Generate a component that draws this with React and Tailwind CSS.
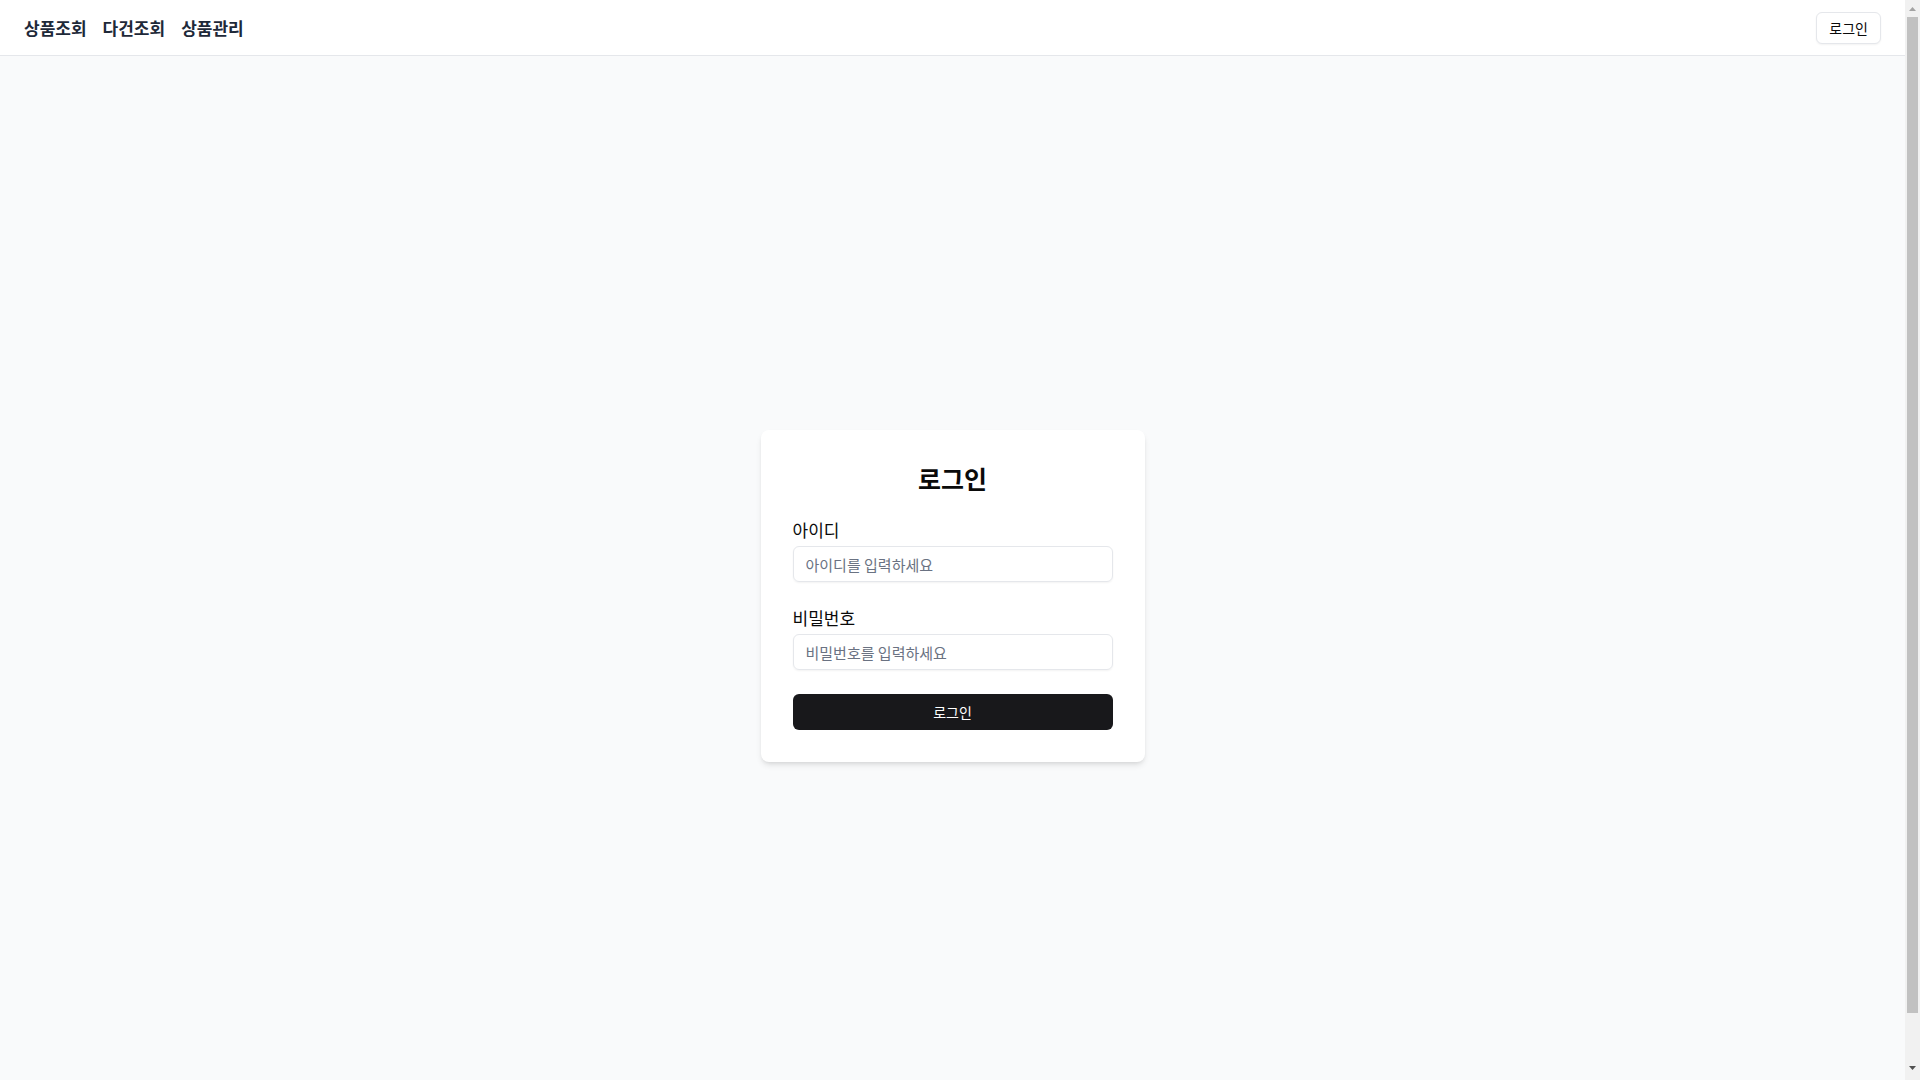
export default function App() {
  return (
    <div className="h-screen flex overflow-hidden bg-gray-50 text-[#0a0a0a]" style={{ fontFamily: '"Noto Sans CJK KR", "Noto Sans", sans-serif' }}>
      <div className="flex-1 min-w-0">
        <header className="h-14 bg-white border-b border-gray-200 flex items-center justify-between px-6">
          <nav className="flex items-center gap-4 text-[17px] leading-6 font-semibold text-gray-800">
            <a href="#">상품조회</a>
            <a href="#">다건조회</a>
            <a href="#">상품관리</a>
          </nav>
          <button className="h-8 px-3 text-sm border border-gray-200 rounded-md bg-white shadow-xs">로그인</button>
        </header>

        <main className="h-screen flex items-center justify-center">
          <div className="w-96 bg-white rounded-lg shadow-md p-8">
            <h1 className="text-[25px] leading-8 font-bold text-center mb-6">로그인</h1>
            <div className="flex flex-col gap-1 mb-6">
              <label className="text-[17px] leading-6 font-normal">아이디</label>
              <input
                type="text"
                placeholder="아이디를 입력하세요"
                className="h-9 w-full px-3 text-[15px] border border-gray-200 rounded-md shadow-xs placeholder:text-gray-500 outline-none"
              />
            </div>
            <div className="flex flex-col gap-1 mb-6">
              <label className="text-[17px] leading-6 font-normal">비밀번호</label>
              <input
                type="password"
                placeholder="비밀번호를 입력하세요"
                className="h-9 w-full px-3 text-[15px] border border-gray-200 rounded-md shadow-xs placeholder:text-gray-500 outline-none"
              />
            </div>
            <button className="h-9 w-full rounded-md bg-[#18181b] text-white text-sm">로그인</button>
          </div>
        </main>
      </div>

      {/* browser scrollbar */}
      <div className="w-[15px] h-screen bg-[#f1f1f1] flex flex-col items-center">
        <div className="h-[17px] flex items-center justify-center">
          <svg width="7" height="4" viewBox="0 0 7 4"><path d="M3.5 0L7 4H0z" fill="#a3a3a3" /></svg>
        </div>
        <div className="w-[11px] flex-1 bg-[#c1c1c1] mb-[4px]" />
        <div className="h-[63px] flex items-end justify-center pb-[10px]">
          <svg width="7" height="4" viewBox="0 0 7 4"><path d="M0 0H7L3.5 4z" fill="#505050" /></svg>
        </div>
      </div>
    </div>
  );
}
